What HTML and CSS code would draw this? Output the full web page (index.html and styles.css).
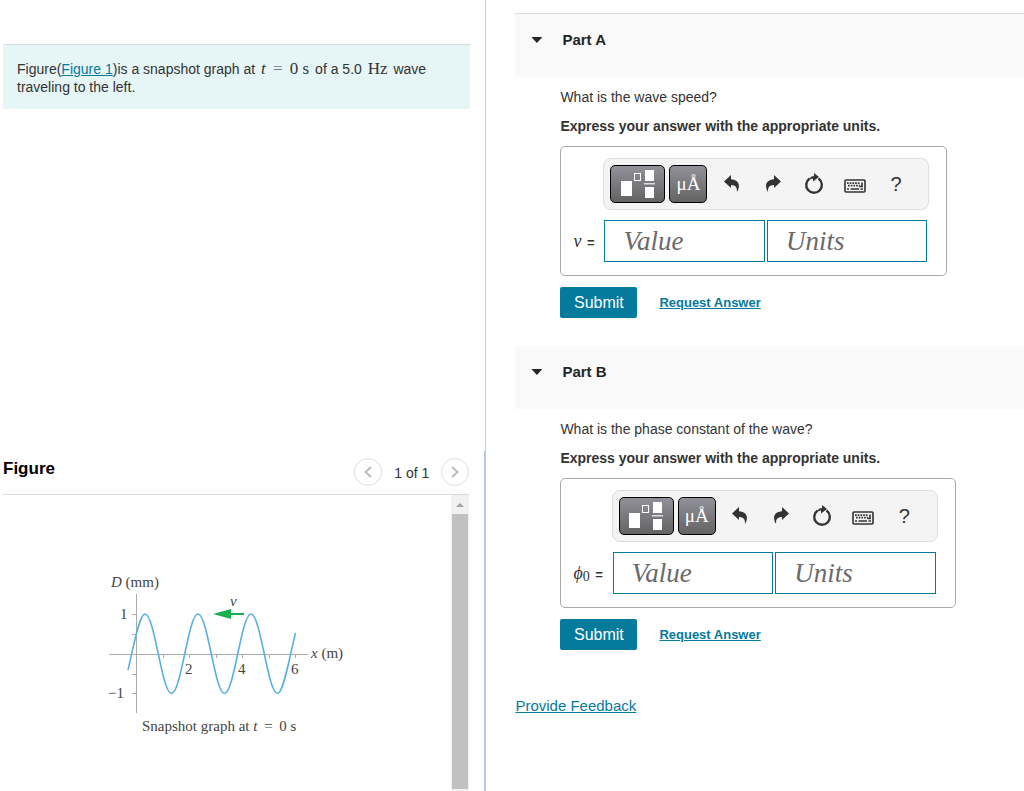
FILE: index.html
```html
<!DOCTYPE html>
<html lang="en">
<head>
<meta charset="utf-8">
<meta name="viewport" content="width=device-width, initial-scale=1">
<title>Snapshot graph problem</title>
<link rel="stylesheet" href="styles.css">
</head>
<body>
<svg class="sprite" aria-hidden="true">
  <symbol id="i-template" viewBox="0 0 34 30">
    <rect x="0" y="12" width="11" height="15" fill="#fff"/>
    <rect x="13.500" y="4.500" width="6" height="7" fill="none" stroke="#fff"/>
    <rect x="24" y="1" width="9" height="11" fill="#fff"/>
    <rect x="23" y="14" width="11" height="1.500" fill="#ddd"/>
    <rect x="24" y="18" width="9" height="11" fill="#fff"/>
  </symbol>
  <symbol id="i-undo" viewBox="0 0 16 18">
    <path d="M0 6.500 7 0v4.200c5.500.3 8.200 3.300 7.900 7.300-.2 2.200-.8 3.900-2 5.300.4-4.500-1.300-6.600-5.900-6.700V13z" fill="#333"/>
  </symbol>
  <symbol id="i-reset" viewBox="0 0 20 22">
    <path d="M5.700 5.500A7.800 7.800 0 1 0 14.500 5.600" fill="none" stroke="#333" stroke-width="2.400"/>
    <path d="M10 0l5 4-6 4.500V5.600L5 6.600l2-2.800 3-.8z" fill="#333"/>
  </symbol>
  <symbol id="i-keys" viewBox="0 0 22 14">
    <rect x="1" y="1" width="20" height="12" rx="1" fill="#f4f4f4" stroke="#333" stroke-width="1.600"/>
    <path d="M3 4.200h13M4 6.700h12" stroke="#333" stroke-width="1.700" stroke-dasharray="1.700 1"/>
    <path d="M3 10h2M6.500 10h8.500M16.500 10H19M18 3.500v4h-2.500" fill="none" stroke="#333" stroke-width="1.600"/>
  </symbol>
</svg>
<div class="layout">
  <div class="left">
    <section class="intro-area">
      <p class="intro">Figure(<a href="#figure">Figure 1</a>)is a snapshot graph at <span class="math"><i>t</i> <span class="eq">=</span> 0 s</span> of a 5.0 <span class="math">Hz</span> wave traveling to the left.</p>
    </section>
    <section class="figure" id="figure">
      <header class="figure-head">
        <h2>Figure</h2>
        <div class="pager">
          <button type="button" aria-label="Previous figure"><svg width="8" height="12" viewBox="0 0 8 12"><path d="M7 1 1.500 6 7 11"/></svg></button>
          <span>1 of 1</span>
          <button type="button" aria-label="Next figure"><svg width="8" height="12" viewBox="0 0 8 12"><path d="M1 1l5.500 5L1 11"/></svg></button>
        </div>
      </header>
      <div class="figure-body">
        <div class="plot">
          <svg class="graph" viewBox="0 0 270 190" width="270" height="190" role="img" aria-label="Snapshot graph of D against x">
            <g class="axes">
              <path d="M14 94.500H213M41.500 34v119"/>
              <path d="M37 54.500h4M37 74.500h4M37 114.500h4M37 133.500h4M68.500 94v4M94.500 94v4M121.500 94v4M147.500 94v4M174.500 94v4M200.500 94v4"/>
            </g>
            <path class="wave" d="M33 110C38.700 86 44.300 54 50 54C59.700 54 66.800 133.500 76.500 133.500S93.300 54 103 54S119.800 133.500 129.500 133.500S146.300 54 156 54S172.800 133.500 182.500 133.500C188.500 133.500 194.500 97 200.500 73"/>
            <path class="arrow-line" d="M130 54h19"/>
            <path class="arrow-tip" d="M118 54l18-5v10z"/>
            <text x="16" y="27"><tspan class="it">D</tspan> (mm)</text>
            <text x="25" y="59">1</text>
            <text x="13" y="138">−1</text>
            <text x="135" y="46" class="it">v</text>
            <text x="90" y="114">2</text>
            <text x="143" y="114">4</text>
            <text x="196" y="114">6</text>
            <text x="216" y="98"><tspan class="it">x</tspan> (m)</text>
            <text x="47" y="171">Snapshot graph at <tspan class="it">t</tspan> &#8201;=&#8201; 0 s</text>
          </svg>
        </div>
        <div class="scrollbar" aria-hidden="true">
          <div class="scroll-up"></div>
          <div class="thumb"></div>
        </div>
      </div>
    </section>
  </div>
  <main class="right">
    <section class="part first">
      <header class="part-head"><span class="caret"></span><h2>Part A</h2></header>
      <div class="part-body">
        <p>What is the wave speed?</p>
        <p class="hint">Express your answer with the appropriate units.</p>
        <form class="answer">
          <div class="toolbar">
            <button type="button" class="tool wide" aria-label="Templates"><svg width="34" height="30"><use href="#i-template"/></svg></button>
            <button type="button" class="tool" aria-label="Unit symbols">μÅ</button>
            <button type="button" class="icon" aria-label="Undo"><svg width="16" height="18"><use href="#i-undo"/></svg></button>
            <button type="button" class="icon flip" aria-label="Redo"><svg width="16" height="18"><use href="#i-undo"/></svg></button>
            <button type="button" class="icon" aria-label="Reset"><svg width="20" height="22"><use href="#i-reset"/></svg></button>
            <button type="button" class="icon keys" aria-label="Keyboard shortcuts"><svg width="22" height="14"><use href="#i-keys"/></svg></button>
            <button type="button" class="icon" aria-label="Help">?</button>
          </div>
          <label class="symbol" for="a-value"><i>v</i> <span>=</span></label>
          <div class="fields">
            <input type="text" id="a-value" placeholder="Value">
            <input type="text" aria-label="Units" placeholder="Units">
          </div>
        </form>
        <div class="actions">
          <button type="button" class="submit">Submit</button>
          <a href="#answer-a">Request Answer</a>
        </div>
      </div>
    </section>
    <section class="part">
      <header class="part-head"><span class="caret"></span><h2>Part B</h2></header>
      <div class="part-body">
        <p>What is the phase constant of the wave?</p>
        <p class="hint">Express your answer with the appropriate units.</p>
        <form class="answer">
          <div class="toolbar">
            <button type="button" class="tool wide" aria-label="Templates"><svg width="34" height="30"><use href="#i-template"/></svg></button>
            <button type="button" class="tool" aria-label="Unit symbols">μÅ</button>
            <button type="button" class="icon" aria-label="Undo"><svg width="16" height="18"><use href="#i-undo"/></svg></button>
            <button type="button" class="icon flip" aria-label="Redo"><svg width="16" height="18"><use href="#i-undo"/></svg></button>
            <button type="button" class="icon" aria-label="Reset"><svg width="20" height="22"><use href="#i-reset"/></svg></button>
            <button type="button" class="icon keys" aria-label="Keyboard shortcuts"><svg width="22" height="14"><use href="#i-keys"/></svg></button>
            <button type="button" class="icon" aria-label="Help">?</button>
          </div>
          <label class="symbol" for="b-value"><i>ϕ</i><sub>0</sub> <span>=</span></label>
          <div class="fields">
            <input type="text" id="b-value" placeholder="Value">
            <input type="text" aria-label="Units" placeholder="Units">
          </div>
        </form>
        <div class="actions">
          <button type="button" class="submit">Submit</button>
          <a href="#answer-b">Request Answer</a>
        </div>
      </div>
    </section>
    <a class="feedback" href="#feedback">Provide Feedback</a>
  </main>
</div>
</body>
</html>
```
FILE: styles.css
```css
* { box-sizing: border-box; }
body {
  margin: 0;
  background: #fff;
  color: #333;
  font: 14px/18px "Liberation Sans", Arial, sans-serif;
}
h2, p { margin: 0; }
button { padding: 0; font: inherit; cursor: pointer; }
a { color: #047a9c; }
.sprite { display: none; }

.layout {
  display: grid;
  grid-template-columns: 19fr 21fr;
  min-height: 100vh;
}
.left { display: flex; flex-direction: column; }
.intro-area {
  flex: 1;
  padding: 44px 15px 0 3px;
  border-right: 1px solid #c3cbd9;
}
.intro {
  padding: 15px 36px 13px 14px;
  border-top: 1px solid #d6dddd;
  background: #e6f6f6;
}
.math {
  margin: 0 2px;
  font-family: "Liberation Serif", "Times New Roman", serif;
  font-size: 17px;
  line-height: 16px;
}
.eq { margin: 0 3px; color: #777; }

.figure {
  display: flex;
  flex-direction: column;
  height: 340px;
  padding: 0 15px 0 3px;
  border-right: 2px solid #b9cbdf;
}
.figure-head {
  display: flex;
  justify-content: space-between;
  align-items: center;
  height: 44px;
  padding-bottom: 2px;
  border-bottom: 1px solid #d8d8d8;
}
.figure-head h2 { padding-bottom: 6px; color: #000; font-size: 17px; }
.pager { display: flex; align-items: center; gap: 12px; }
.pager span { padding-top: 3px; }
.pager button {
  display: grid;
  place-items: center;
  width: 28px;
  height: 28px;
  border: 1px solid #ddd;
  border-radius: 50%;
  background: #fff;
}
.pager path { fill: none; stroke: #bbb; stroke-width: 2; }
.figure-body { display: flex; flex: 1; }
.plot { flex: 1; padding: 65px 0 0 92px; }
.graph { display: block; font: 15px "Liberation Serif", "Times New Roman", serif; fill: #444; }
.it { font-style: italic; }
.axes { fill: none; stroke: #aaa; }
.wave { fill: none; stroke: #5bb0e2; stroke-width: 1.6; }
.arrow-line { stroke: #16b04c; stroke-width: 2; }
.arrow-tip { fill: #16b04c; }
.scrollbar {
  display: flex;
  flex-direction: column;
  width: 18px;
  padding: 0 1px 2px;
  background: #f1f1f1;
}
.scroll-up { display: grid; place-items: center; height: 19px; }
.scroll-up::before {
  content: "";
  border: 4px solid transparent;
  border-top: 0;
  border-bottom-color: #a3a3a3;
}
.thumb { flex: 1; background: #c1c1c1; }

.right { padding: 13px 0 0 29px; }
.part { margin-bottom: 28px; }
.part-head {
  display: flex;
  gap: 20px;
  height: 63px;
  padding: 17px 16px;
  background: #f9f9f9;
}
.first .part-head { height: 64px; border-top: 1px solid #ddd; }
.part-head h2 { color: #252525; font-size: 15px; line-height: 18px; }
.caret {
  width: 11px;
  height: 6px;
  margin-top: 6px;
  background: #252525;
  clip-path: polygon(0 0, 100% 0, 50% 100%);
}
.part-body { padding: 11px 0 0 45px; }
.hint { margin-top: 11px; font-weight: bold; }
.answer {
  display: grid;
  grid-template-columns: auto 326px;
  column-gap: 9px;
  row-gap: 10px;
  width: fit-content;
  margin-top: 11px;
  padding: 11px 17px 13px 12px;
  border: 1px solid #a9a9a9;
  border-radius: 5px;
}
.toolbar {
  display: flex;
  grid-column: 2;
  align-items: center;
  height: 52px;
  padding-left: 6px;
  border: 1px solid #ddd;
  border-radius: 8px;
  background: #f4f4f4;
}
.tool {
  display: grid;
  place-items: center;
  width: 38px;
  height: 38px;
  margin-right: 4px;
  border: 1px solid #000;
  border-radius: 5px;
  background: linear-gradient(#92919a, #636363);
  color: #fff;
  font: 19px/24px "Liberation Serif", "Times New Roman", serif;
}
.wide { width: 55px; }
.icon {
  display: grid;
  place-items: center;
  width: 41px;
  height: 38px;
  border: 0;
  background: none;
  color: #333;
  font-size: 20px;
}
.flip svg { transform: scaleX(-1); }
.keys { padding-top: 4px; }
.symbol {
  align-self: center;
  font: 18px/20px "Liberation Serif", "DejaVu Serif", serif;
  white-space: nowrap;
}
.symbol span { margin-left: 1px; font: bold 13px "Liberation Sans", Arial, sans-serif; }
.symbol sub { font-size: 14px; line-height: 1; vertical-align: -2px; }
.fields { display: grid; grid-template-columns: 1fr 1fr; gap: 2px; padding: 0 2px 0 1px; }
.fields input {
  min-width: 0;
  width: 100%;
  height: 42px;
  padding: 0 18px;
  border: 1px solid #047a9c;
  border-radius: 0;
  background: #fff;
  color: #333;
  font: italic 27px "Liberation Serif", "Times New Roman", serif;
}
.fields input::placeholder { color: #6a6a6a; opacity: 1; }
.actions { display: flex; align-items: center; gap: 22px; margin-top: 11px; }
.submit {
  width: 77px;
  height: 31px;
  border: 0;
  border-radius: 2px;
  background: #047a9c;
  color: #fff;
  font-size: 16px;
}
.actions a { font-size: 13px; font-weight: bold; }
.feedback { display: inline-block; margin-top: 19px; font-size: 15px; }
```
